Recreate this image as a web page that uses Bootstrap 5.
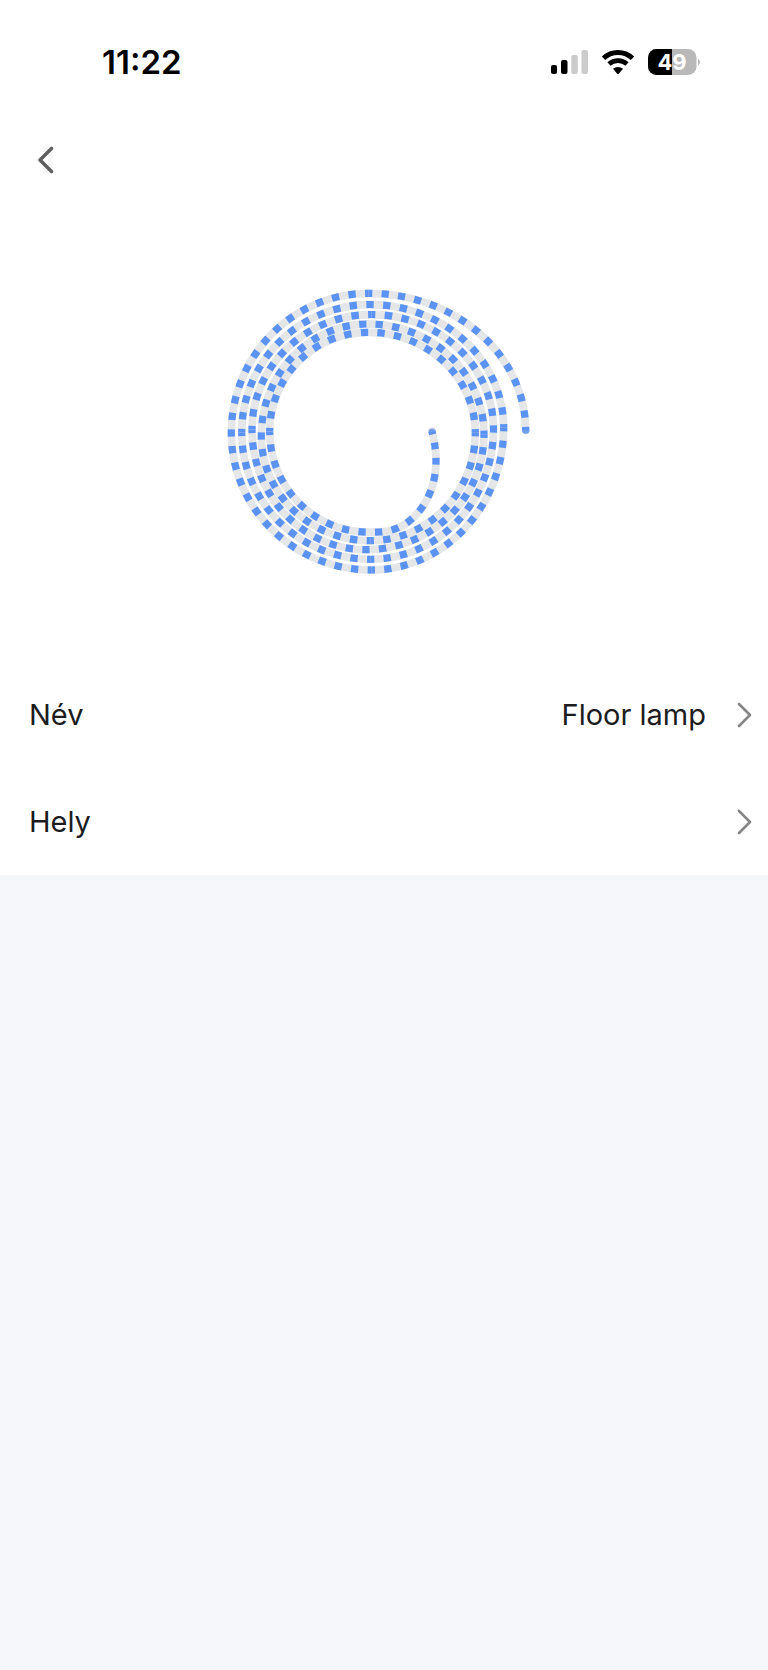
<!DOCTYPE html>
<html lang="hu">
<head>
<meta charset="utf-8">
<meta name="viewport" content="width=device-width, initial-scale=1">
<title>Floor lamp</title>
<link href="https://cdn.jsdelivr.net/npm/bootstrap@5.3.0/dist/css/bootstrap.min.css" rel="stylesheet">
<style>
  body { background: #f5f7fb; color: #1c1c1e; font-family: Inter, "Liberation Sans", sans-serif; }
  .status-bar { height: 124px; padding: 0 68px 0 102px; color: #000; }
  .clock { font-size: 33px; font-weight: 600; line-height: 36px; }
  .nav-strip { height: 72px; padding: 0 22px; }
  .back-btn { width: 48px; height: 48px; }
  .hero { height: 465px; }
  .setting-row { height: 107px; padding: 0 16px 0 29px; font-size: 29px; line-height: 36px; color: #1c1c1e; background: #fff; }
  .setting-value { margin-right: 30px; }
  svg { display: block; flex: none; }
</style>
</head>
<body>
<main class="bg-white">
  <header class="status-bar d-flex align-items-center justify-content-between">
    <time class="clock">11:22</time>
    <div class="d-flex align-items-center">
      <svg width="150" height="28" viewBox="0 0 150 28" role="img" aria-label="49%">
        <rect x="1" y="17" width="6" height="9" rx="2"/>
        <rect x="11" y="12" width="6.5" height="14" rx="2"/>
        <rect x="21.300" y="7" width="6.500" height="19" rx="2" fill="#cbcbcb"/>
        <rect x="31.500" y="2" width="6.500" height="24" rx="2" fill="#cbcbcb"/>
        <g fill="none" stroke="#000" stroke-width="4.800">
          <path d="M53.500 10.300a21 21 0 0 1 29 0"/>
          <path d="M59 16a13.500 13.500 0 0 1 18 0"/>
        </g>
        <path d="M63 20.700a7.800 7.800 0 0 1 10 0L69 25.500q-1 1-2 0z"/>
        <clipPath id="charge"><path d="M98 0h24v28H98z"/></clipPath>
        <rect x="98" y="1" width="48.500" height="26" rx="8.500" fill="#b9b9b9"/>
        <rect x="98" y="1" width="48.500" height="26" rx="8.500" clip-path="url(#charge)"/>
        <path d="M148 10.500q2 1 2 3.500t-2 3.500z" fill="#b9b9b9"/>
        <text x="122" y="22" text-anchor="middle" font-size="22" font-weight="700" fill="#fff">49</text>
      </svg>
    </div>
  </header>

  <nav class="nav-strip d-flex align-items-center">
    <button type="button" class="back-btn btn p-0 border-0 d-flex align-items-center justify-content-center" aria-label="Vissza">
      <svg width="20" height="30" viewBox="0 0 20 30" fill="none" stroke="#606060" stroke-width="3.600" stroke-linecap="round" stroke-linejoin="round"><path d="M15.500 3.500L4 15l11.500 11.500"/></svg>
    </button>
  </nav>

  <section class="hero d-flex justify-content-center">
    <svg width="320" height="465" viewBox="224 196 320 465" fill="none" role="img" aria-label="LED">
      <g stroke="#e5e6e8" stroke-width="7.800">
        <path stroke-linecap="round" d="M525.700 430.500A157 137.200 0 0 0 368.700 293.300A137.400 139.700 0 0 0 231.300 433A140 137 0 0 0 371.300 570A132.400 142.300 0 0 0 503.700 427.700A133.700 123.200 0 0 0 370 304.500A128.300 128 0 0 0 241.700 432.500A129 126.800 0 0 0 370.700 559.300A122.800 130.300 0 0 0 493.500 429A121.800 114.500 0 0 0 371.700 314.500A119.700 115 0 0 0 252 429.500A114 120.200 0 0 0 366 549.700A118 115.500 0 0 0 484 434.200A116 110.200 0 0 0 368 324A106.700 112 0 0 0 261.300 436A109 104.700 0 0 0 370.300 540.700A105 107.900 0 0 0 475.300 432.800A107.300 100.500 0 0 0 368 332.300A98.300 99.200 0 0 0 269.700 431.500A98.900 100.700 0 0 0 368.600 532.200L378.600 532A57.400 71 0 0 0 436 461Q436 447 431.900 431"/>
      </g>
      <g stroke="#5b93f5" stroke-width="7.200" stroke-dasharray="4.400 5.600" stroke-dashoffset="2.200">
        <path pathLength="140" d="M525.700 430.500A157 137.200 0 0 0 368.700 293.300"/>
        <path pathLength="130" d="M368.700 293.300A137.400 139.700 0 0 0 231.300 433"/>
        <path pathLength="130" d="M231.300 433A140 137 0 0 0 371.300 570"/>
        <path pathLength="130" d="M371.300 570A132.400 142.300 0 0 0 503.700 427.700"/>
        <path pathLength="120" d="M503.700 427.700A133.700 123.200 0 0 0 370 304.500"/>
        <path pathLength="120" d="M370 304.500A128.300 128 0 0 0 241.700 432.500"/>
        <path pathLength="120" d="M241.700 432.500A129 126.800 0 0 0 370.700 559.300"/>
        <path pathLength="120" d="M370.700 559.300A122.800 130.300 0 0 0 493.500 429"/>
        <path pathLength="110" d="M493.500 429A121.800 114.500 0 0 0 371.700 314.500"/>
        <path pathLength="110" d="M371.700 314.500A119.700 115 0 0 0 252 429.500"/>
        <path pathLength="110" d="M252 429.500A114 120.200 0 0 0 366 549.700"/>
        <path pathLength="110" d="M366 549.700A118 115.500 0 0 0 484 434.200"/>
        <path pathLength="106.800" d="M484 434.200A116 110.200 0 0 0 368 324"/>
        <path pathLength="103.200" stroke-dashoffset="9" d="M368 324A106.700 112 0 0 0 261.300 436"/>
        <path pathLength="100" d="M261.300 436A109 104.700 0 0 0 370.300 540.700"/>
        <path pathLength="100" d="M370.300 540.700A105 107.900 0 0 0 475.300 432.800"/>
        <path pathLength="97.900" d="M475.300 432.800A107.300 100.500 0 0 0 368 332.300"/>
        <path pathLength="92.100" stroke-dashoffset="10.100" d="M368 332.300A98.300 99.200 0 0 0 269.700 431.500"/>
        <path pathLength="94" d="M269.700 431.500A98.900 100.700 0 0 0 368.600 532.200"/>
        <path pathLength="66" stroke-dashoffset="6.200" d="M368.600 532.200L378.600 532A57.400 71 0 0 0 436 461"/>
        <path pathLength="20" d="M436 461Q436 447 431.900 431"/>
      </g>
      <g fill="#6f9fee">
        <path d="M522 430h7.600a3.800 3.800 0 0 1-7.600 0z"/>
        <path d="M428.400 432.500a3.800 3.800 0 0 1 7.200-1.800z"/>
      </g>
    </svg>
  </section>

  <div class="list-group list-group-flush rounded-0">
    <button type="button" class="setting-row list-group-item-action border-0 d-flex align-items-center">
      <span class="me-auto">Név</span>
      <span class="setting-value">Floor lamp</span>
      <svg width="16" height="28" viewBox="0 0 16 28" fill="none" stroke="#858585" stroke-width="2.600" stroke-linecap="round" stroke-linejoin="round"><path d="M3 3l11 11L3 25"/></svg>
    </button>
    <button type="button" class="setting-row list-group-item-action border-0 d-flex align-items-center">
      <span class="me-auto">Hely</span>
      <svg width="16" height="28" viewBox="0 0 16 28" fill="none" stroke="#858585" stroke-width="2.600" stroke-linecap="round" stroke-linejoin="round"><path d="M3 3l11 11L3 25"/></svg>
    </button>
  </div>
</main>
<script src="https://cdn.jsdelivr.net/npm/bootstrap@5.3.0/dist/js/bootstrap.bundle.min.js"></script>
</body>
</html>
